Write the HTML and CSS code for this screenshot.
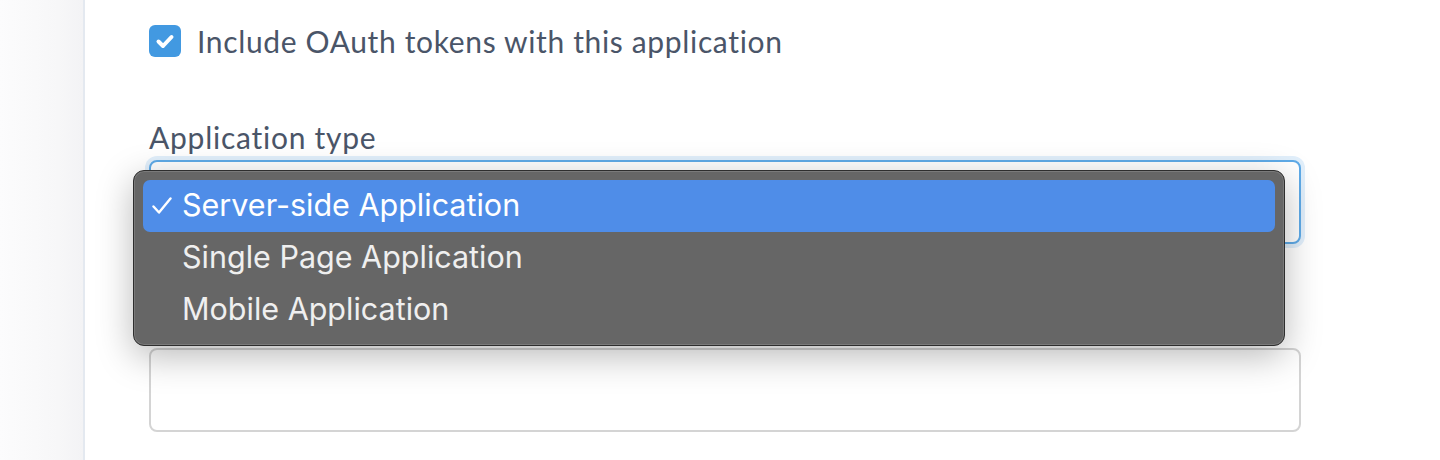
FILE: index.html
```html
<!DOCTYPE html>
<html>
<head>
<meta charset="utf-8">
<link rel="stylesheet" href="styles.css">
</head>
<body>
<div class="layout">
  <aside class="sidebar"></aside>
  <main class="main">
    <label class="check-row">
      <span class="checkbox">
        <svg viewBox="0 0 32 32" width="32" height="32"><path d="M9.5 16.5 L14 21 L22.5 12" fill="none" stroke="#fff" stroke-width="4" stroke-linecap="round" stroke-linejoin="round"/></svg>
      </span>
      <span class="check-text">Include OAuth tokens with this application</span>
    </label>

    <div class="field">
      <div class="field-label">Application type</div>
      <div class="select-wrap">
        <div class="select"></div>
        <div class="menu">
          <div class="menu-item selected"><span class="tick"><svg viewBox="0 0 20 18" width="20" height="18"><path d="M1.5 9.5 L7 15.5 L18.5 1.5" fill="none" stroke="#fff" stroke-width="2.4" stroke-linecap="round" stroke-linejoin="round"/></svg></span>Server-side Application</div>
          <div class="menu-item"><span class="tick"></span>Single Page Application</div>
          <div class="menu-item"><span class="tick"></span>Mobile Application</div>
        </div>
      </div>
    </div>

    <div class="field second">
      <div class="input"></div>
    </div>
  </main>
</div>
</body>
</html>
```

FILE: styles.css
```css
html, body {
  margin: 0;
  padding: 0;
  background: #ffffff;
  height: 100%;
  overflow: hidden;
}

.layout {
  display: flex;
  height: 460px;
}

.sidebar {
  width: 83px;
  flex: none;
  background: linear-gradient(to right, #fcfcfd 0%, #f7f7f8 70%, #f3f3f5 100%);
  border-right: 2px solid #e4e9f0;
}

.main {
  flex: 1;
  padding: 25px 0 0 64px;
  font-family: "Lato", "Noto Sans", sans-serif;
  color: #4a5568;
}

.check-row {
  display: flex;
  align-items: center;
  gap: 16px;
  height: 32px;
}

.checkbox {
  width: 32px;
  height: 32px;
  border-radius: 6px;
  background: #4299e1;
  display: flex;
  align-items: center;
  justify-content: center;
}

.checkbox svg { display: block; }

.check-text {
  font-size: 30px;
  letter-spacing: 0.65px;
  line-height: 32px;
}

.field {
  margin-top: 60px;
  width: 1152px;
}

.field-label {
  font-size: 30px;
  line-height: 40px;
  letter-spacing: 0.75px;
  margin-bottom: 3px;
}

.select-wrap {
  position: relative;
}

.select {
  height: 80px;
  border: 2px solid #5fabe8;
  border-radius: 8px;
  box-shadow: 0 0 0 4px #e1effb;
  background: #fff;
}

.menu {
  position: absolute;
  top: 10px;
  left: -16px;
  width: 1132px;
  padding: 9px 9px;
  background: #666666;
  border: 1px solid #2e2e2e;
  border-radius: 11px;
  box-shadow: inset 0 0 0 1px #7a7a7a, 0 10px 36px rgba(0, 0, 0, 0.28);
  font-family: "Inter", "Roboto", sans-serif;
  color: #efefef;
  z-index: 10;
}

.menu-item {
  display: flex;
  align-items: center;
  height: 52px;
  box-sizing: border-box;
  padding-bottom: 4px;
  font-size: 30.5px;
  border-radius: 7px;
  padding-left: 9px;
}

.menu-item.selected {
  background: #4f8de8;
  color: #ffffff;
}

.tick {
  width: 30px;
  flex: none;
  display: flex;
  align-items: center;
  padding-top: 4px;
}

.tick svg { display: block; }

.second {
  margin-top: 104px;
}

.input {
  height: 80px;
  border: 2px solid #d4d4d4;
  border-radius: 8px;
  background: #fff;
}
```
